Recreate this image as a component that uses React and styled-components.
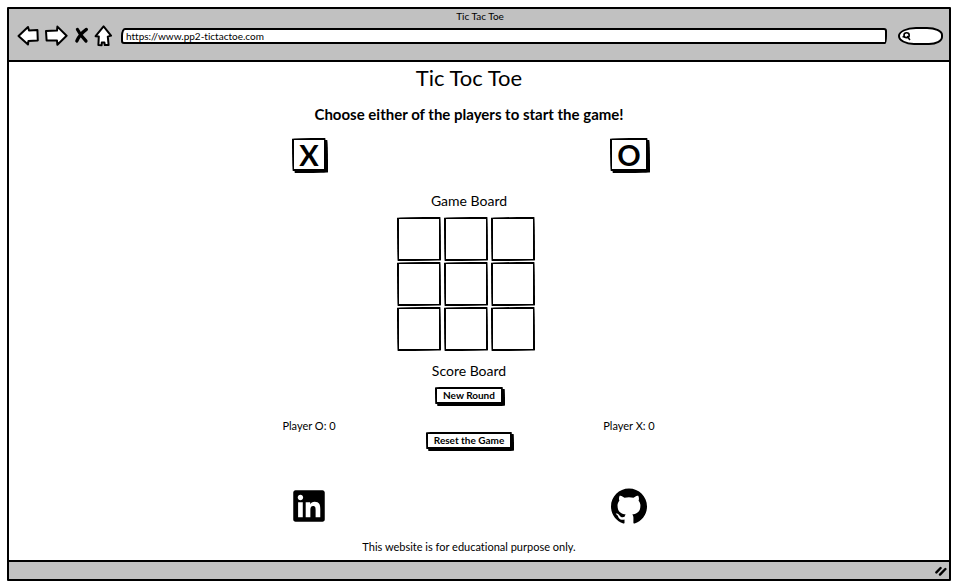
import React, { useState } from "react";
import styled, { createGlobalStyle } from "styled-components";
import { FaLinkedin } from "react-icons/fa";
import { SiGithub } from "react-icons/si";

const GlobalStyle = createGlobalStyle`
  * { box-sizing: border-box; }
  body {
    margin: 0;
    background: #fff;
    color: #000;
    font-family: Lato, "Open Sans", sans-serif;
    font-size: 11px;
    font-variant-ligatures: none;
    line-height: 16px;
  }
  h1, h2, p { margin: 0; font-weight: 400; }
  button, input { font: inherit; color: inherit; }
`;

const BrowserWindow = styled.div`
  display: flex;
  flex-direction: column;
  min-height: calc(100vh - 14px);
  margin: 7px;
  border: 2px solid #000;
  border-radius: 1px;
`;

const BrowserHeader = styled.header`
  padding: 0 6px 12px 8px;
  background: #c1c1c1;
  border-bottom: 2px solid #000;
`;

const WindowTitle = styled.p`
  font-size: 10px;
  line-height: 15px;
  text-align: center;
`;

const Toolbar = styled.nav`
  display: flex;
  align-items: center;
  gap: 5px;
  height: 24px;
`;

const ToolButton = styled.button`
  display: flex;
  padding: 0;
  border: 0;
  background: none;
  cursor: pointer;
`;

const Drawing = styled.svg`
  display: block;
  fill: #fff;
  stroke: #000;
  stroke-width: 2;
  stroke-linejoin: round;
  stroke-linecap: round;
`;

const Address = styled.input`
  flex: 1;
  min-width: 0;
  height: 16px;
  margin: 0 6px 0 3px;
  padding: 0 3px;
  border: 2px solid #000;
  border-radius: 4px 3px 2px 3px / 8px 3px 8px 3px;
  background: #fff;
  font-size: 10px;
  font-variant-ligatures: none;
  line-height: 12px;
`;

const SearchBox = styled.label`
  display: flex;
  align-items: center;
  width: 45px;
  height: 18px;
  padding-left: 2px;
  border: 2px solid #000;
  border-radius: 18px 16px 14px 16px / 9px 8px 8px 9px;
  background: #fff;
`;

const SearchInput = styled.input`
  flex: 1;
  min-width: 0;
  height: 12px;
  padding: 0;
  border: 0;
  outline: 0;
  background: none;
`;

const Page = styled.main`
  flex: 1;
  display: flex;
  flex-direction: column;
  align-items: center;
  padding: 3px 20px 5px 0;
`;

const PageTitle = styled.h1`
  font-size: 22px;
  line-height: 26px;
`;

const Prompt = styled.h2`
  margin-top: 13px;
  font-size: 15px;
  font-weight: 700;
  line-height: 20px;
`;

const Columns = styled.div`
  display: grid;
  grid-template-columns: repeat(${(p) => p.$count}, 1fr);
  justify-items: center;
  align-items: center;
  width: 100%;
  max-width: ${(p) => p.$count * (p.$count === 2 ? 320 : 160)}px;
  margin-top: ${(p) => p.$space}px;
`;

const SketchButton = styled.button`
  padding: 0 6px;
  border: 2px solid #000;
  border-radius: 40px 1px 30px 1px / 1px 30px 1px 40px;
  background: #fff;
  box-shadow: 2px 2px 0 #000;
  font-size: 10px;
  font-weight: 700;
  line-height: 13px;
  cursor: pointer;
`;

const PlayerButton = styled(SketchButton)`
  height: 33px;
  padding: 0 5px;
  font-size: 29px;
  line-height: 29px;
`;

const GameSection = styled.section`
  width: 144px;
  margin-top: 20px;
`;

const SectionTitle = styled.h2`
  font-size: 14px;
  line-height: 20px;
  text-align: center;
`;

const Board = styled.div`
  display: grid;
  grid-template-columns: repeat(3, 44px);
  grid-auto-rows: 44px;
  gap: 1px 3px;
  margin: 6px 0 10px;
`;

const Cell = styled.button`
  padding: 0;
  border: 2px solid #000;
  border-radius: 60px 1px 60px 1px / 1px 60px 1px 60px;
  background: #fff;
  font-size: 29px;
  font-weight: 700;
  line-height: 29px;
  cursor: pointer;
`;

const ScoreActions = styled.div`
  display: flex;
  flex-direction: column;
  align-items: center;
  gap: 28px;
`;

const Score = styled.p`
  padding-top: 16px;
`;

const ProfileLink = styled.a`
  display: flex;
  color: #000;
  font-size: 36px;
`;

const Notice = styled.p`
  margin-top: auto;
`;

const StatusBar = styled.footer`
  display: flex;
  align-items: center;
  justify-content: flex-end;
  height: 19px;
  padding-right: 2px;
  background: #c1c1c1;
  border-top: 2px solid #000;
`;

const tools = [
  {
    name: "Back",
    width: 22,
    box: "17 23 22 22",
    shape: <path d="M18.5 34 L28 25 L29 28.6 L37.4 28 L37.8 38.4 L28.4 39 L28 42.4 Z" />,
  },
  {
    name: "Forward",
    width: 24,
    box: "44 23 24 22",
    shape: <path d="M46 29 L57 28.6 L57.4 24.6 L66.6 33.8 L57.4 42.8 L57 38.6 L46.6 38.4 Z" />,
  },
  {
    name: "Stop",
    width: 16,
    box: "74 23 16 22",
    shape: <path d="M78.4 27.4 Q81 33 87 39 M87.4 27.4 Q81 32 77.8 39" strokeWidth="3.2" fill="none" />,
  },
  {
    name: "Home",
    width: 19,
    box: "94 23 19 22",
    shape: <path d="M103.6 24.4 L111 33.6 L107.8 34.6 L108.6 43 L104.8 43 L104.4 40.4 L101.8 40.6 L101.6 43.2 L98.4 43 L98.8 34.4 L95.6 34.2 Z" />,
  },
];

export default function App() {
  const [turn, setTurn] = useState("X");
  const [cells, setCells] = useState(Array(9).fill(""));

  const play = (index) => {
    if (cells[index]) return;
    setCells(cells.map((cell, i) => (i === index ? turn : cell)));
    setTurn(turn === "X" ? "O" : "X");
  };
  const clear = () => setCells(Array(9).fill(""));

  return (
    <>
      <GlobalStyle />
      <BrowserWindow>
        <BrowserHeader>
          <WindowTitle>Tic Tac Toe</WindowTitle>
          <Toolbar>
            {tools.map((tool) => (
              <ToolButton key={tool.name} type="button" aria-label={tool.name}>
                <Drawing width={tool.width} height="22" viewBox={tool.box}>
                  {tool.shape}
                </Drawing>
              </ToolButton>
            ))}
            <Address aria-label="Address" defaultValue="https://www.pp2-tictactoe.com" />
            <SearchBox>
              <Drawing width="9" height="10" viewBox="0 0 9 10" aria-hidden="true">
                <ellipse cx="4.6" cy="4.2" rx="2.6" ry="2.5" strokeWidth="1.6" />
                <path d="M2.4 5.6 L1.2 5.8 M5.4 5.6 L7.6 8.4" strokeWidth="1.6" />
              </Drawing>
              <SearchInput type="search" aria-label="Search" />
            </SearchBox>
          </Toolbar>
        </BrowserHeader>

        <Page>
          <PageTitle>Tic Toc Toe</PageTitle>
          <Prompt>Choose either of the players to start the game!</Prompt>
          <Columns $count={2} $space={14}>
            <PlayerButton type="button" onClick={() => setTurn("X")}>X</PlayerButton>
            <PlayerButton type="button" onClick={() => setTurn("O")}>O</PlayerButton>
          </Columns>

          <GameSection>
            <SectionTitle>Game Board</SectionTitle>
            <Board>
              {cells.map((cell, i) => (
                <Cell key={i} type="button" aria-label={`Square ${i + 1}`} onClick={() => play(i)}>
                  {cell}
                </Cell>
              ))}
            </Board>
          </GameSection>

          <SectionTitle>Score Board</SectionTitle>
          <Columns $count={3} $space={6}>
            <Score>Player O: 0</Score>
            <ScoreActions>
              <SketchButton type="button" onClick={clear}>New Round</SketchButton>
              <SketchButton type="button" onClick={clear}>Reset the Game</SketchButton>
            </ScoreActions>
            <Score>Player X: 0</Score>
          </Columns>

          <Columns $count={2} $space={39}>
            <ProfileLink href="#linkedin" aria-label="LinkedIn"><FaLinkedin /></ProfileLink>
            <ProfileLink href="#github" aria-label="GitHub"><SiGithub /></ProfileLink>
          </Columns>
          <Notice>This website is for educational purpose only.</Notice>
        </Page>

        <StatusBar>
          <Drawing width="12" height="10" viewBox="0 0 12 10" aria-hidden="true">
            <path d="M1.4 6.4 L5.6 2 M5 8.6 L10.4 3" strokeWidth="2.4" />
          </Drawing>
        </StatusBar>
      </BrowserWindow>
    </>
  );
}
